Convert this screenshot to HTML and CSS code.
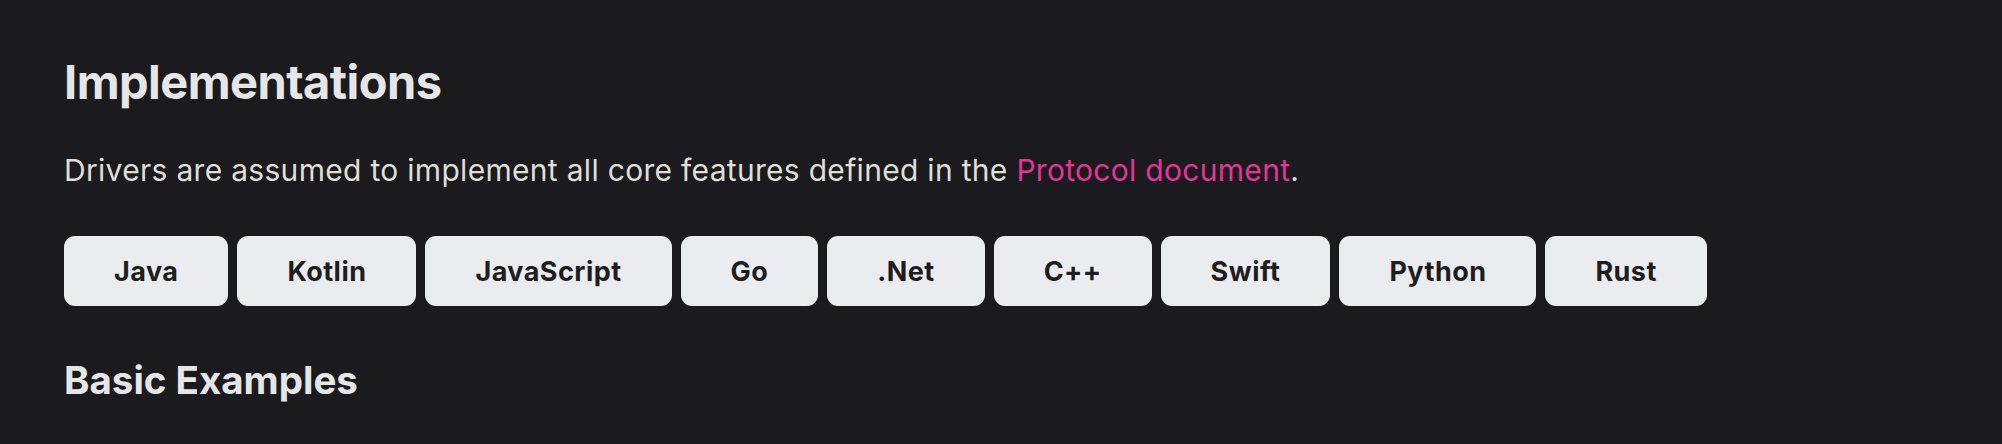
FILE: index.html
```html
<!DOCTYPE html>
<html lang="en">
<head>
<meta charset="utf-8">
<title>Implementations</title>
<link rel="stylesheet" href="styles.css">
</head>
<body>
<main class="doc">
  <h1 class="title">Implementations</h1>
  <p class="lead">Drivers are assumed to implement all core features defined in the <a class="link" href="#">Protocol document</a>.</p>
  <div class="langs">
    <button class="lang">Java</button>
    <button class="lang">Kotlin</button>
    <button class="lang">JavaScript</button>
    <button class="lang">Go</button>
    <button class="lang">.Net</button>
    <button class="lang">C++</button>
    <button class="lang">Swift</button>
    <button class="lang">Python</button>
    <button class="lang">Rust</button>
  </div>
  <h2 class="sub">Basic Examples</h2>
</main>
</body>
</html>
```
FILE: styles.css
```css
html, body {
  margin: 0;
  padding: 0;
  background: #1b1b1f;
}
body {
  font-family: Inter, "Noto Sans", sans-serif;
  color: #dfdfd6;
}
.doc {
  padding: 54px 64px 0;
}
.title {
  margin: 0;
  font-size: 47px;
  line-height: 1.2;
  font-weight: 700;
  letter-spacing: -0.55px;
  color: #e6e6e6;
}
.lead {
  margin: 38px 0 0;
  font-size: 30px;
  line-height: 1.5;
  font-weight: 400;
  letter-spacing: 0.3px;
}
.link {
  color: #e33595;
  text-decoration: none;
}
.langs {
  margin-top: 43px;
  display: flex;
  flex-wrap: wrap;
  gap: 9px;
}
.lang {
  height: 70px;
  padding: 0 50px;
  border: none;
  border-radius: 11px;
  background: #ebecf0;
  color: #1e1e21;
  font-family: Inter, "Noto Sans", sans-serif;
  font-size: 27px;
  font-weight: 700;
  letter-spacing: 0.45px;
  display: flex;
  align-items: center;
  justify-content: center;
}
.sub {
  margin: 51px 0 0;
  font-size: 38.5px;
  line-height: 1.2;
  font-weight: 700;
  color: #e6e6e6;
}
```
